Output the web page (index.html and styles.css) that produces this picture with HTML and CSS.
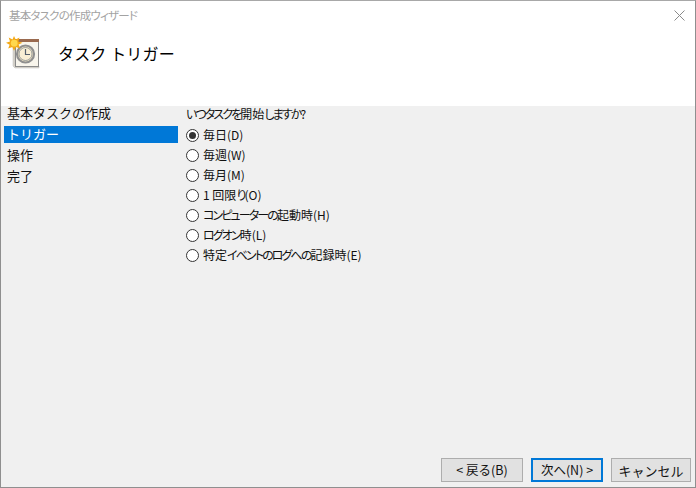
FILE: index.html
```html
<!DOCTYPE html>
<html lang="ja">
<head>
<meta charset="utf-8">
<title>基本タスクの作成ウィザード</title>
<link rel="stylesheet" href="styles.css">
</head>
<body>
<div class="window">
  <div class="titlebar">
    <span class="title">基本タスクの作成ウィザード</span>
    <svg class="close" width="11" height="11" viewBox="0 0 11 11"><path d="M0.5 0.5L10.5 10.5M10.5 0.5L0.5 10.5" stroke="#8a8a8a" stroke-width="1" fill="none"/></svg>
  </div>
  <div class="header">
    <svg class="icon" width="34" height="34" viewBox="0 0 34 34">
      <path d="M7 6H9V30H33V32H9L7 30Z" fill="#d9d5cb" stroke="#b8b8b8" stroke-width="0.5"/>
      <rect x="9.5" y="5.5" width="23" height="25" fill="#f8f5ec" stroke="#8a8a8a"/>
      <rect x="9" y="3" width="24" height="3" fill="#9a6a4f"/>
      <circle cx="19.5" cy="18" r="8.5" fill="#f5e7c6" stroke="#8f8f8f" stroke-width="2.2"/>
      <circle cx="19.5" cy="18" r="6.5" fill="#f8eed4" stroke="#5f6f80" stroke-width="0.6"/>
      <path d="M19.5 13V18.5H24" stroke="#55606c" stroke-width="1.2" fill="none"/>
      <path d="M8 0L9.7 3.4L13.5 1.5L12.3 5.5L16.5 6.7L12.6 8.6L14 12.5L10 11L8 14.8L6.3 11L2.2 12.5L3.6 8.7L0 6.8L4 5.5L2.7 1.5L6.5 3.4Z" fill="#f4a916"/>
      <circle cx="8.2" cy="7.2" r="3.4" fill="#ffd84d"/>
    </svg>
    <h1 class="heading">タスク トリガー</h1>
  </div>
  <div class="main">
    <nav class="nav">
      <div class="nav-head">基本タスクの作成</div>
      <div class="nav-item selected">トリガー</div>
      <div class="nav-item">操作</div>
      <div class="nav-item">完了</div>
    </nav>
    <section class="content">
      <div class="question"><span class="k">いつタスクを</span>開始<span class="k">しますか</span>?</div>
      <label class="opt"><input type="radio" name="t" checked><span class="lbl">毎日(D)</span></label>
      <label class="opt"><input type="radio" name="t"><span class="lbl">毎週(W)</span></label>
      <label class="opt"><input type="radio" name="t"><span class="lbl">毎月(M)</span></label>
      <label class="opt"><input type="radio" name="t"><span class="lbl">1 回限<span class="k">り</span>(O)</span></label>
      <label class="opt"><input type="radio" name="t"><span class="lbl"><span class="k">コンピューターの</span>起動時(H)</span></label>
      <label class="opt"><input type="radio" name="t"><span class="lbl"><span class="k">ログオン</span>時(L)</span></label>
      <label class="opt"><input type="radio" name="t"><span class="lbl">特定<span class="k">イベントのログへの</span>記録時(E)</span></label>
    </section>
  </div>
  <div class="footer">
    <button class="btn back">&lt; 戻る(B)</button>
    <button class="btn next">次へ(N) &gt;</button>
    <button class="btn cancel">キャンセル</button>
  </div>
</div>
</body>
</html>
```
FILE: styles.css
```css
* { box-sizing: border-box; }
html, body { margin: 0; padding: 0; }
body {
  width: 696px;
  height: 488px;
  overflow: hidden;
  font-family: "Noto Sans CJK JP", "Liberation Sans", sans-serif;
  color: #111;
}
.window {
  width: 696px;
  height: 488px;
  display: flex;
  flex-direction: column;
  border: 1px solid #8f8f8f;
  border-top-color: #a8a8a8;
  background: #f0f0f0;
}
.titlebar {
  height: 29px;
  flex: none;
  background: #fff;
  display: flex;
  align-items: center;
  justify-content: space-between;
  padding: 0 10px 0 8px;
}
.title {
  font-size: 11.5px;
  color: #a3a3a3;
  font-feature-settings: "palt";
  letter-spacing: -0.8px;
  padding-bottom: 2px;
}
.close { display: block; }
.header {
  height: 76px;
  flex: none;
  background: #fff;
  display: flex;
  align-items: flex-start;
  padding: 6px 0 0 5px;
}
.icon { display: block; flex: none; }
.heading {
  margin: 5px 0 0 18px;
  font-size: 16px;
  font-weight: 400;
  line-height: 24px;
  color: #000;
  letter-spacing: 0.15px;
}
.main { flex: 1; display: flex; min-height: 0; }
.nav { width: 177px; flex: none; padding: 0 0 0 3px; }
.nav-head, .nav-item {
  font-size: 13px;
  line-height: 16px;
  padding-left: 3px;
  margin-bottom: 4px;
  height: 17px;
}
.nav-head { margin-top: -1px; margin-bottom: 5px; height: 16px; line-height: 15px; }
.selected { background: #0078d7; color: #fff; }
.content { flex: 1; padding: 0 0 0 8px; }
.question {
  font-size: 12px;
  line-height: 15px;
  height: 19px;
  font-feature-settings: "palt";
}
.k { letter-spacing: -1.9px; }
.opt {
  display: flex;
  align-items: center;
  height: 20px;
  font-size: 12px;
  font-feature-settings: "palt";
}
.lbl { padding-bottom: 2px; }
.opt input {
  appearance: none;
  width: 13px;
  height: 13px;
  margin: 0 4px 0 0;
  border: 1px solid #333;
  border-radius: 50%;
  background: #fff;
  flex: none;
  position: relative;
}
.opt input:checked::after {
  content: "";
  position: absolute;
  inset: 2px;
  border-radius: 50%;
  background: #333;
}
.footer {
  flex: none;
  display: flex;
  justify-content: flex-end;
  gap: 8px;
  padding: 0 4px 5px 0;
}
.btn {
  height: 24px;
  border: 1px solid #adadad;
  background: #e1e1e1;
  font-family: inherit;
  font-size: 12.5px;
  color: #111;
  padding: 0;
  line-height: 1;
}
.back { width: 82px; }
.next { width: 72px; border: 2px solid #0078d7; }
.cancel { width: 80px; font-size: 13px; }
```
